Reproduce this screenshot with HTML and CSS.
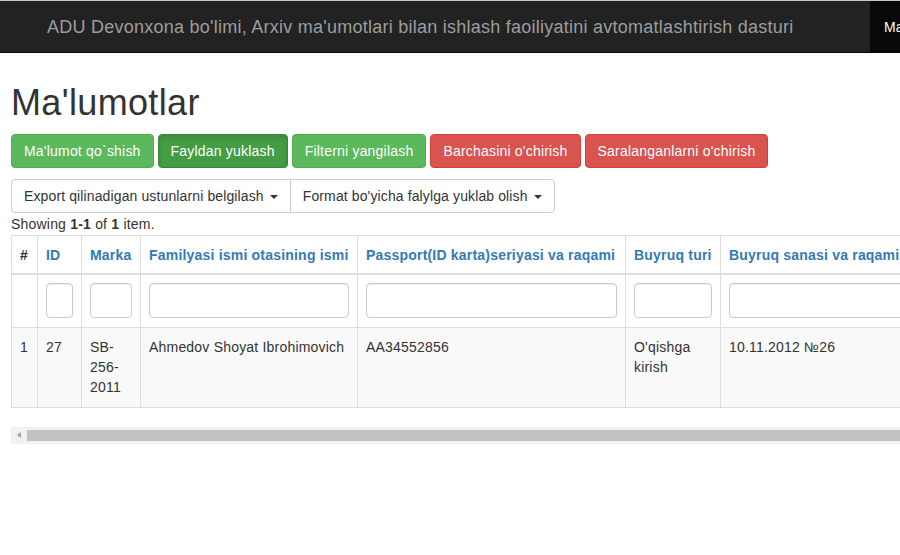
FILE: index.html
```html
<!DOCTYPE html>
<html lang="uz">
<head>
<meta charset="utf-8">
<title>Ma'lumotlar</title>
<link rel="stylesheet" href="styles.css">
</head>
<body>
<div class="page">
  <nav class="navbar">
    <div class="navbar-brand">ADU Devonxona bo'limi, Arxiv ma'umotlari bilan ishlash faoiliyatini avtomatlashtirish dasturi</div>
    <div class="navbar-right">Ma'lumotlar</div>
  </nav>

  <main class="content">
    <h1 class="title">Ma'lumotlar</h1>

    <div class="actions">
      <button class="btn btn-success">Ma'lumot qo`shish</button>
      <button class="btn btn-success active">Fayldan yuklash</button>
      <button class="btn btn-success">Filterni yangilash</button>
      <button class="btn btn-danger">Barchasini o'chirish</button>
      <button class="btn btn-danger">Saralanganlarni o'chirish</button>
    </div>

    <div class="btn-group">
      <button class="btn btn-default">Export qilinadigan ustunlarni belgilash <span class="caret"></span></button>
      <button class="btn btn-default">Format bo'yicha falylga yuklab olish <span class="caret"></span></button>
    </div>

    <div class="summary">Showing <b>1-1</b> of <b>1</b> item.</div>

    <div class="table-wrap">
      <table class="grid">
        <colgroup>
          <col class="c-num"><col class="c-id"><col class="c-marka"><col class="c-fio"><col class="c-pass"><col class="c-turi"><col class="c-sana"><col class="c-extra">
        </colgroup>
        <thead>
          <tr>
            <th>#</th>
            <th><a>ID</a></th>
            <th><a>Marka</a></th>
            <th><a>Familyasi ismi otasining ismi</a></th>
            <th><a>Passport(ID karta)seriyasi va raqami</a></th>
            <th><a>Buyruq turi</a></th>
            <th><a>Buyruq sanasi va raqami</a></th>
            <th><a>Izoh</a></th>
          </tr>
          <tr class="filters">
            <td></td>
            <td><input class="form-control" type="text"></td>
            <td><input class="form-control" type="text"></td>
            <td><input class="form-control" type="text"></td>
            <td><input class="form-control" type="text"></td>
            <td><input class="form-control" type="text"></td>
            <td><input class="form-control" type="text"></td>
            <td><input class="form-control" type="text"></td>
          </tr>
        </thead>
        <tbody>
          <tr class="striped">
            <td>1</td>
            <td>27</td>
            <td>SB-256-2011</td>
            <td>Ahmedov Shoyat Ibrohimovich</td>
            <td>AA34552856</td>
            <td>O'qishga kirish</td>
            <td>10.11.2012 №26</td>
            <td></td>
          </tr>
        </tbody>
      </table>
    </div>

    <div class="hscroll">
      <div class="hscroll-btn"><span class="arrow-left"></span></div>
      <div class="hscroll-thumb"></div>
    </div>
  </main>
</div>
</body>
</html>
```

FILE: styles.css
```css
* { box-sizing: border-box; }

html, body {
  margin: 0;
  padding: 0;
  background: #fff;
  overflow: hidden;
}

body {
  font-family: "Liberation Sans", Arial, Helvetica, sans-serif;
  font-size: 14px;
  line-height: 20px;
  color: #333;
  letter-spacing: 0.2px;
}

.page {
  width: 900px;
  height: 555px;
  overflow: hidden;
}

/* navbar */
.navbar {
  display: flex;
  align-items: stretch;
  height: 53px;
  background: #222;
  border-top: 1px solid #c8c8c8;
  border-bottom: 1px solid #080808;
  width: 1200px;
}

.navbar-brand {
  width: 870px;
  flex: none;
  padding-left: 47px;
  display: flex;
  align-items: center;
  font-size: 18px;
  color: #9d9d9d;
  white-space: nowrap;
  letter-spacing: 0.25px;
}

.navbar-right {
  background: #080808;
  color: #fff;
  padding-left: 14px;
  display: flex;
  align-items: center;
  font-size: 14px;
  flex: 1;
}

/* content */
.content {
  padding-left: 11px;
}

.title {
  margin: 30px 0 11px;
  font-size: 36px;
  font-weight: 500;
  line-height: 39.6px;
  color: #333;
  letter-spacing: 0.35px;
}

.actions {
  display: flex;
  gap: 4px;
  margin-bottom: 11px;
}

.btn {
  font-family: inherit;
  font-size: 14px;
  line-height: 20px;
  letter-spacing: 0.2px;
  padding: 6px 12px;
  height: 34px;
  border: 1px solid transparent;
  border-radius: 4px;
  cursor: pointer;
  white-space: nowrap;
}

.btn-success {
  color: #fff;
  background: #5cb85c;
  border-color: #4cae4c;
}

.btn-success.active {
  background: #449d44;
  border-color: #398439;
  box-shadow: inset 0 3px 5px rgba(0,0,0,.125);
}

.btn-danger {
  color: #fff;
  background: #d9534f;
  border-color: #d43f3a;
}

.btn-default {
  color: #333;
  background: #fff;
  border-color: #ccc;
  letter-spacing: 0.12px;
}

.btn-group {
  display: flex;
}

.btn-group .btn:first-child {
  border-top-right-radius: 0;
  border-bottom-right-radius: 0;
}

.btn-group .btn + .btn {
  margin-left: -1px;
  border-top-left-radius: 0;
  border-bottom-left-radius: 0;
}

.caret {
  display: inline-block;
  width: 0;
  height: 0;
  margin-left: 2px;
  vertical-align: middle;
  border-top: 4px solid #333;
  border-right: 4px solid transparent;
  border-left: 4px solid transparent;
}

.summary {
  margin-top: 1px;
  height: 21px;
}

/* table */
.table-wrap {
  width: 1200px;
}

.grid {
  table-layout: fixed;
  border-collapse: collapse;
  border-spacing: 0;
  width: 1200px;
  margin-bottom: 19px;
}

.c-num { width: 26px; }
.c-id { width: 44px; }
.c-marka { width: 59px; }
.c-fio { width: 217px; }
.c-pass { width: 268px; }
.c-turi { width: 95px; }
.c-sana { width: 200px; }
.c-extra { width: 291px; }

.grid th,
.grid td {
  border: 1px solid #ddd;
  padding: 8px;
  text-align: left;
  vertical-align: top;
  line-height: 20px;
}

.grid th {
  font-weight: bold;
  white-space: nowrap;
  border-bottom: 2px solid #ddd;
  vertical-align: bottom;
  color: #333;
  padding-top: 9px;
}

.grid th a {
  color: #337ab7;
}

.filters td {
  padding-top: 8px;
  padding-bottom: 9px;
}

.form-control {
  display: block;
  width: 100%;
  height: 35px;
  padding: 6px 12px;
  font-family: inherit;
  font-size: 14px;
  color: #555;
  background: #fff;
  border: 1px solid #ccc;
  border-radius: 4px;
  box-shadow: inset 0 1px 1px rgba(0,0,0,.075);
}

.striped td {
  background: #f9f9f9;
  padding-top: 9px;
  padding-bottom: 10px;
}

/* horizontal scrollbar */
.hscroll {
  display: flex;
  width: 1200px;
  height: 17px;
  background: #f1f1f1;
}

.hscroll-btn {
  width: 16px;
  flex: none;
  display: flex;
  align-items: center;
  justify-content: center;
}

.arrow-left {
  width: 0;
  height: 0;
  border-top: 3px solid transparent;
  border-bottom: 3px solid transparent;
  border-right: 4px solid #a3a3a3;
}

.hscroll-thumb {
  flex: 1;
  margin: 3px 0 3px 0;
  background: #c1c1c1;
}
```
